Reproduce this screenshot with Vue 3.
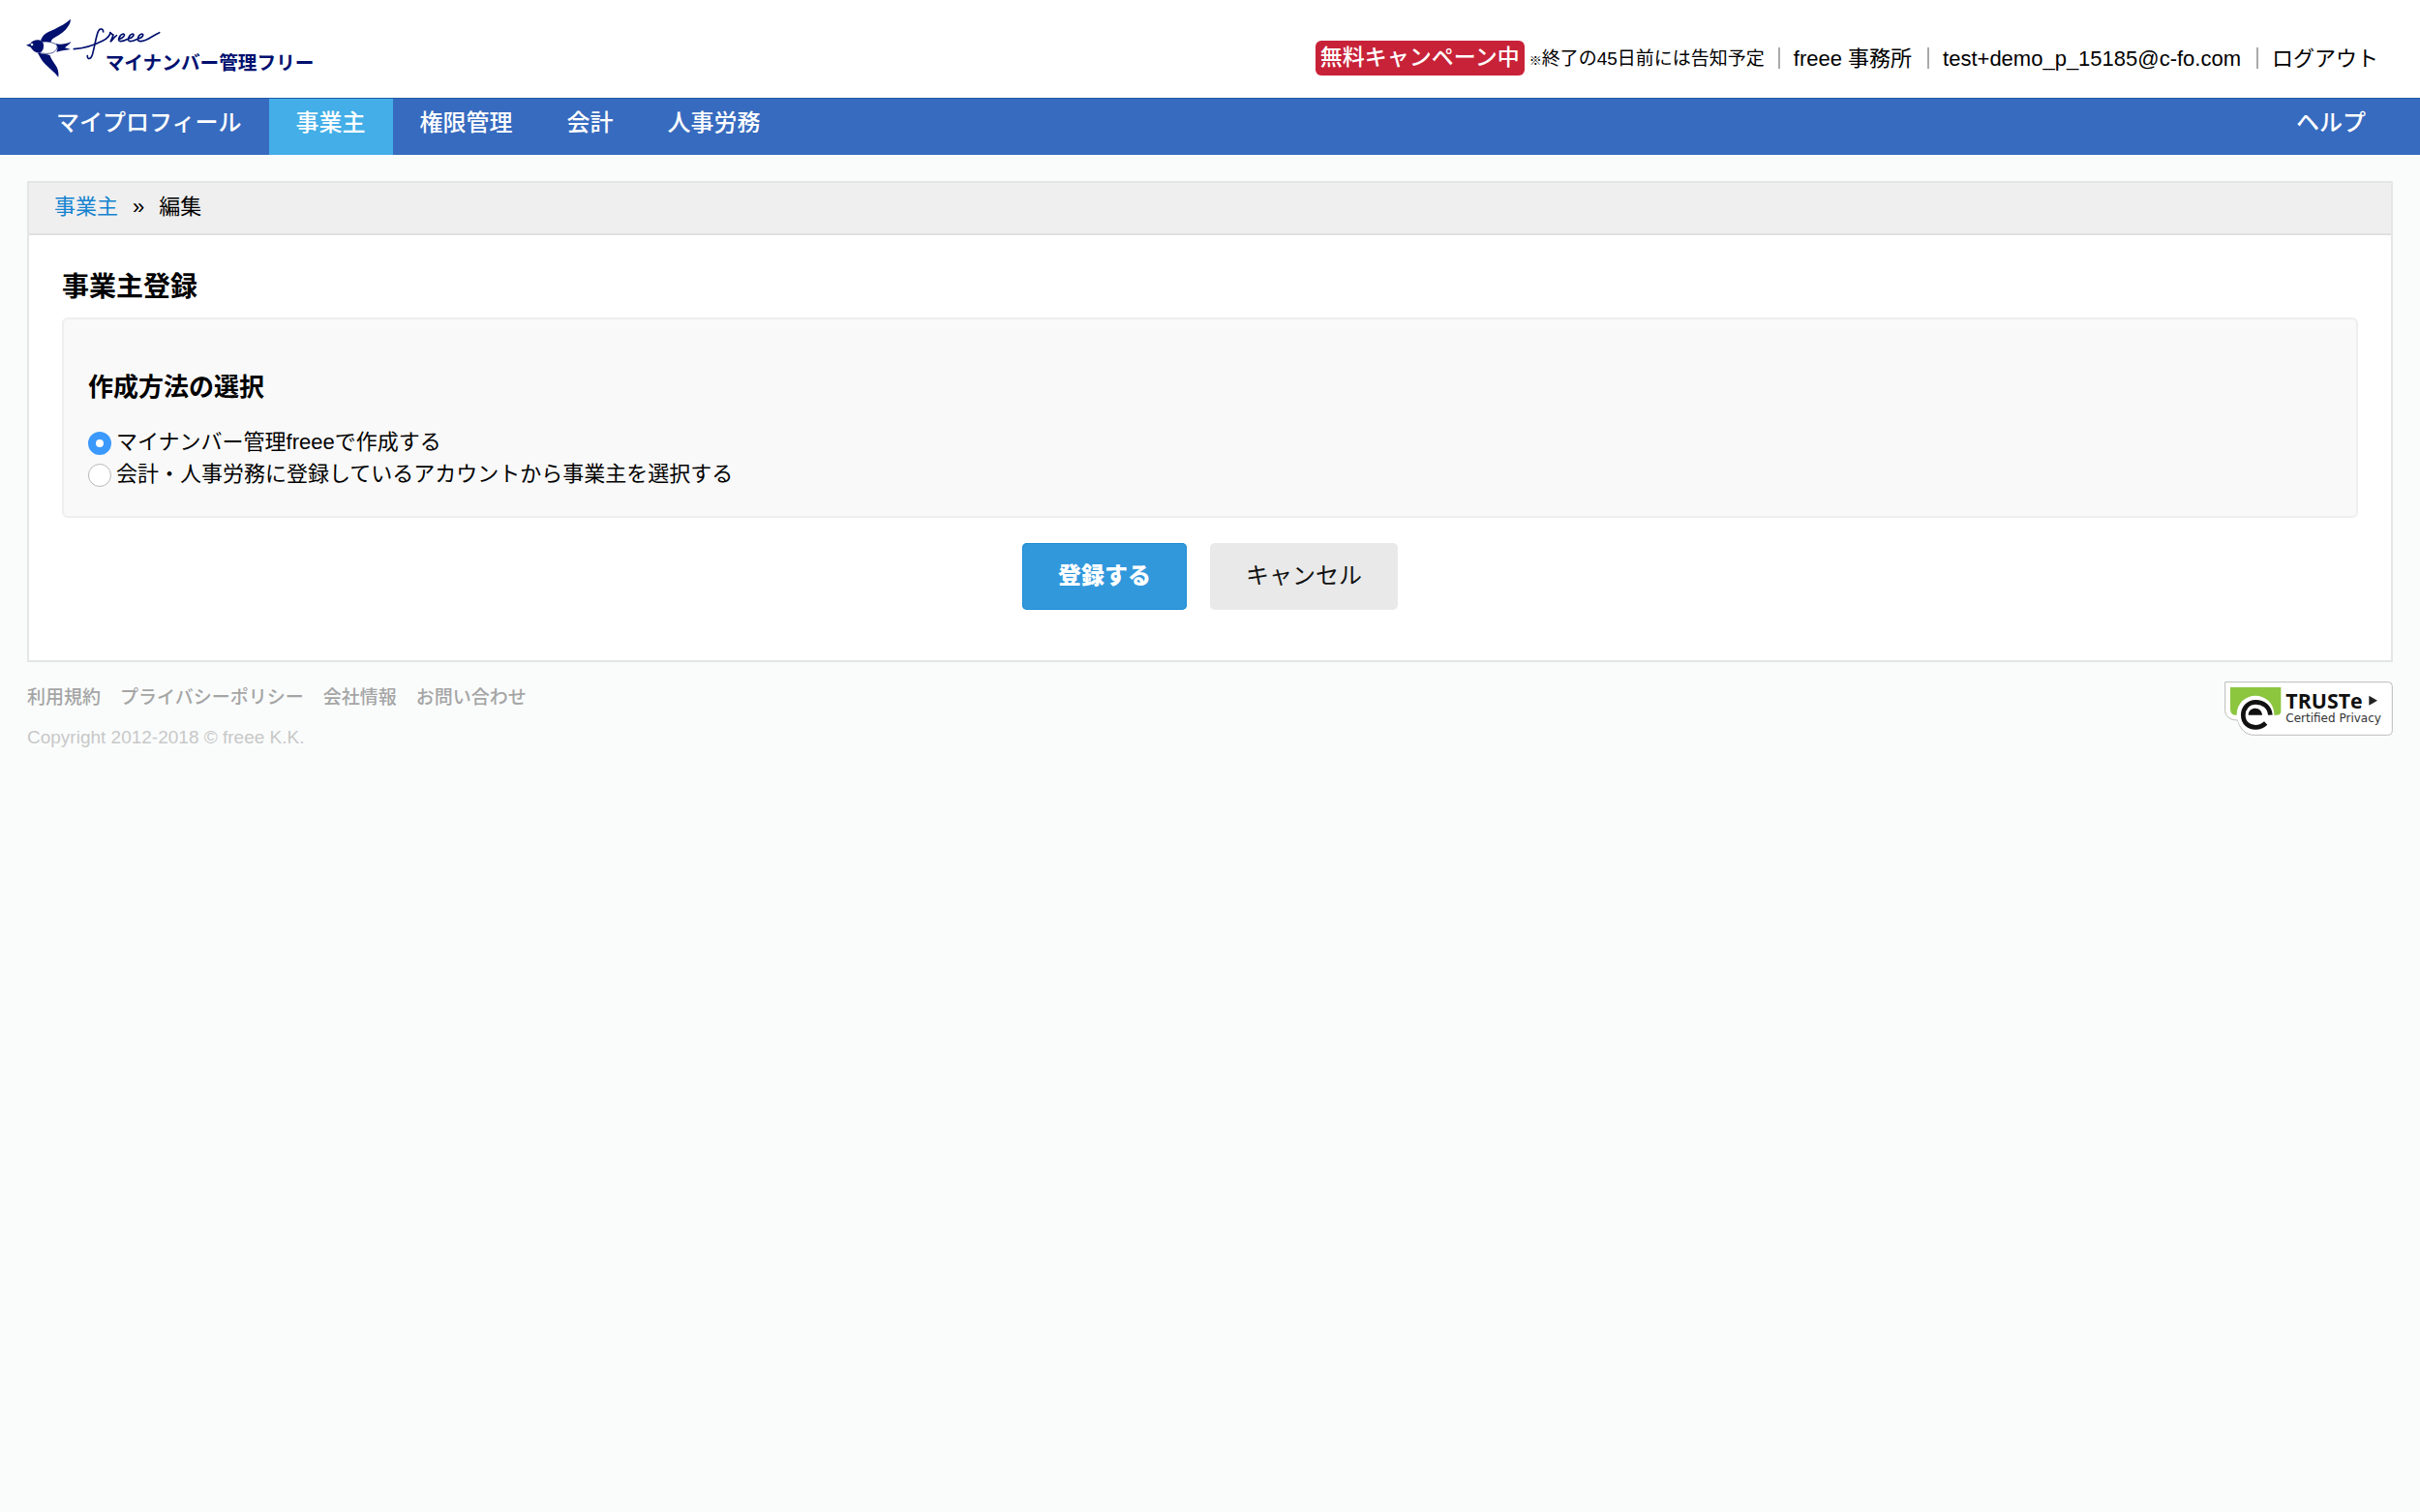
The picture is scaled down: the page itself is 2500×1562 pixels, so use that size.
<script setup>
import { ref } from 'vue'

const tabs = [
  { label: 'マイプロフィール' },
  { label: '事業主', active: true },
  { label: '権限管理' },
  { label: '会計' },
  { label: '人事労務' },
]
const footerLinks = ['利用規約', 'プライバシーポリシー', '会社情報', 'お問い合わせ']
const method = ref('create')
</script>

<template>
  <div class="page">
    <header class="header">
      <a class="logo" href="#" aria-label="freee マイナンバー管理フリー">
        <svg width="300" height="62" viewBox="0 0 900 186">
          <g transform="translate(-84 -56)">
            <path fill="#00106f" d="M129 124C134 111 142 103 153 98C181 85 205 74 221 58C223 65 219 73 214 81C205 96 190 106 170 117C163 121 162 126 160 130L135 129Z" />
            <path fill="#00106f" d="M120 163C138 166 154 167 158 171C161 180 165 187 174 199C182 210 186 222 184 238C171 222 155 210 143 198C132 186 127 176 120 163Z" />
            <path fill="#fff" stroke="#00106f" stroke-width="2" d="M134 129C150 126 170 131 181 139C181 150 176 158 165 163C152 167 138 165 124 163Z" />
            <path fill="#00106f" d="M84 139L97 134C103 124 116 121 128 124C136 127 139 134 138 143C138 152 134 160 126 163C112 162 103 155 98 145Z" />
            <circle cx="102" cy="137" r="4" fill="#fff" />
            <path fill="#00106f" d="M176 135C191 137 208 136 224 128C217 138 209 142 204 147L222 152C208 155 193 155 178 160C183 152 183 144 176 135Z" />
            <path fill="none" stroke="#00106f" stroke-width="5" stroke-linecap="round" stroke-linejoin="round" d="M232 151C262 149 295 139 322 125C332 120 342 112 345 101C342 96 349 105 354 107C352 116 345 128 346 128C350 128 356 112 364 109" />
            <path fill="none" stroke="#00106f" stroke-width="5" stroke-linecap="round" d="M323 98C323 86 312 86 307 97C300 115 296 145 289 169C284 184 273 184 274 172" />
            <path fill="none" stroke="#00106f" stroke-width="5" stroke-linecap="round" d="M372 120C386 117 393 105 385 104C375 105 364 126 376 127C390 127 395 121 401 119C416 116 421 105 414 104C404 105 394 126 406 127C419 127 424 121 431 119C446 116 450 105 443 104C433 105 423 126 437 127C460 127 473 110 497 100" />
          </g>
          <text x="245" y="158" class="logo-text">マイナンバー管理フリー</text>
        </svg>
      </a>
      <ul class="account">
        <li>
          <span class="badge">無料キャンペーン中</span>
          <span class="note"><small>※</small>終了の45日前には告知予定</span>
        </li>
        <li><a href="#">freee 事務所</a></li>
        <li><a href="#">test+demo_p_15185@c-fo.com</a></li>
        <li><a href="#">ログアウト</a></li>
      </ul>
    </header>

    <nav class="nav">
      <a v-for="tab in tabs" :key="tab.label" href="#" :class="{ active: tab.active }">{{ tab.label }}</a>
      <a class="help" href="#">ヘルプ</a>
    </nav>

    <main class="card">
      <div class="breadcrumb">
        <a href="#">事業主</a>
        <span>»</span>
        <span>編集</span>
      </div>
      <form class="content" @submit.prevent>
        <h1>事業主登録</h1>
        <section class="panel">
          <h2>作成方法の選択</h2>
          <label><input v-model="method" type="radio" name="method" value="create" /><span>マイナンバー管理freeeで作成する</span></label>
          <label><input v-model="method" type="radio" name="method" value="select" /><span>会計・人事労務に登録しているアカウントから事業主を選択する</span></label>
        </section>
        <div class="actions">
          <button class="primary" type="submit">登録する</button>
          <button type="button">キャンセル</button>
        </div>
      </form>
    </main>

    <footer class="footer">
      <div>
        <ul class="links">
          <li v-for="link in footerLinks" :key="link"><a href="#">{{ link }}</a></li>
        </ul>
        <p>Copyright 2012-2018 © freee K.K.</p>
      </div>
      <a class="seal" href="#" aria-label="TRUSTe Certified Privacy">
        <svg width="174" height="56" viewBox="0 0 522 168">
          <path fill="#fff" stroke="#bbb" stroke-width="3" d="M2 2H508Q520 2 520 14V152Q520 166 506 166H92C66 166 48 148 41 120C16 120 2 108 2 88Z" />
          <path fill="#8cc63f" d="M18 18H175V92Q175 104 162 104H36Q18 104 18 86Z" />
          <circle cx="96" cy="102" r="58" fill="#fff" />
          <path fill="none" stroke="#111" stroke-width="14" d="M142 104C140 78 120 64 97 64C73 64 58 83 58 104C58 128 75 142 96 142C110 142 120 137 128 129" />
          <path fill="#111" d="M74 104C74 90 84 83 96 83C108 83 116 92 117 104Z" />
          <text x="190" y="83" class="seal-name">TRUSTe</text>
          <path fill="#222" d="M448 44L474 59L448 74Z" />
          <text x="190" y="125" class="seal-sub">Certified Privacy</text>
        </svg>
      </a>
    </footer>
  </div>
</template>

<style>
body {
  background: #fafcfc;
}
</style>

<style scoped>
.page {
  color: #000;
  font-family: "Liberation Sans", "Noto Sans CJK JP", sans-serif;
  font-size: 22px;
  line-height: 33px;
}
a {
  color: inherit;
  text-decoration: none;
}
ul {
  display: flex;
  margin: 0;
  padding: 0;
  list-style: none;
}
.header {
  display: flex;
  justify-content: space-between;
  align-items: flex-start;
  height: 101px;
  padding: 19px 43px 0 27px;
  box-sizing: border-box;
  background: #fff;
}
.logo svg,
.seal svg {
  display: block;
}
.logo-text {
  fill: #00106f;
  font-family: "Noto Sans CJK JP", sans-serif;
  font-size: 59px;
  font-weight: 700;
}
.account {
  align-items: center;
  padding-top: 22px;
}
.account li {
  display: flex;
  align-items: center;
  height: 38px;
}
.account li + li::before {
  content: "";
  width: 2px;
  height: 22px;
  margin: 0 14px 0 16px;
  background: #aaa;
}
.account li:nth-child(2)::before {
  margin-left: 14px;
}
.badge {
  margin-right: 5px;
  padding: 1px 5px 2px;
  border-radius: 6px;
  background: #c82238;
  color: #fff;
  font-size: 23px;
  font-weight: 500;
}
.note {
  padding-top: 3px;
  font-size: 19px;
}
.note small {
  font-size: 13px;
  font-weight: 700;
}
.nav {
  display: flex;
  padding: 0 28px 0 30px;
  border-top: 1px solid #1f5bab;
  background: #376bbf;
  color: #fff;
  font-size: 24px;
  font-weight: 500;
}
.nav a {
  padding: 8px 28px 17px;
}
.nav .active {
  background: #43aee7;
}
.nav .help {
  margin-left: auto;
}
.card {
  margin: 27px 28px 0;
  border: 2px solid #e4e6e6;
  background: #fff;
}
.breadcrumb {
  display: flex;
  gap: 15px;
  padding: 8px 26px 11px;
  border-bottom: 2px solid #e0e0e0;
  background: #efefef;
}
.breadcrumb a {
  color: #1583d0;
}
.content {
  padding: 34px 34px 52px;
}
h1,
h2 {
  margin: 0;
  font-weight: 700;
}
h1 {
  font-size: 28px;
  line-height: 40px;
}
.panel {
  margin-top: 11px;
  padding: 50px 25px 26px;
  border: 2px solid #eee;
  border-radius: 6px;
  background: #f9f9f9;
}
h2 {
  margin-bottom: 21px;
  font-size: 26px;
  line-height: 40px;
}
.panel label {
  display: flex;
  align-items: center;
  gap: 5px;
  width: max-content;
}
.panel label span {
  height: 33px;
  padding-bottom: 2px;
  box-sizing: border-box;
  line-height: 31px;
}
.panel input {
  appearance: none;
  width: 24px;
  height: 24px;
  margin: 0;
  border: 1px solid #b8b8b8;
  border-radius: 50%;
  background: #fff;
}
.panel input:checked {
  border: 8px solid #3b99fc;
}
.actions {
  display: flex;
  justify-content: center;
  gap: 24px;
  margin-top: 26px;
}
button {
  padding: 16px 37px 17px;
  border: 0;
  border-radius: 5px;
  background: #e9e9e9;
  color: #111;
  font: 24px/36px "Liberation Sans", "Noto Sans CJK JP", sans-serif;
}
.primary {
  background: #3298dc;
  box-shadow: inset 0 0 0 1px #1c8bd4;
  color: #fff;
  font-weight: 900;
}
.footer {
  display: flex;
  justify-content: space-between;
  padding: 20px 28px;
  color: #a5a5a5;
  font-size: 19px;
}
.links {
  gap: 20px;
  font-weight: 500;
}
.footer p {
  margin: 8px 0 0;
  color: #c8c8c8;
}
.seal-name {
  fill: #111;
  font: 700 64px "Open Sans", sans-serif;
}
.seal-sub {
  fill: #333;
  font: 36px "DejaVu Sans", sans-serif;
}
</style>
